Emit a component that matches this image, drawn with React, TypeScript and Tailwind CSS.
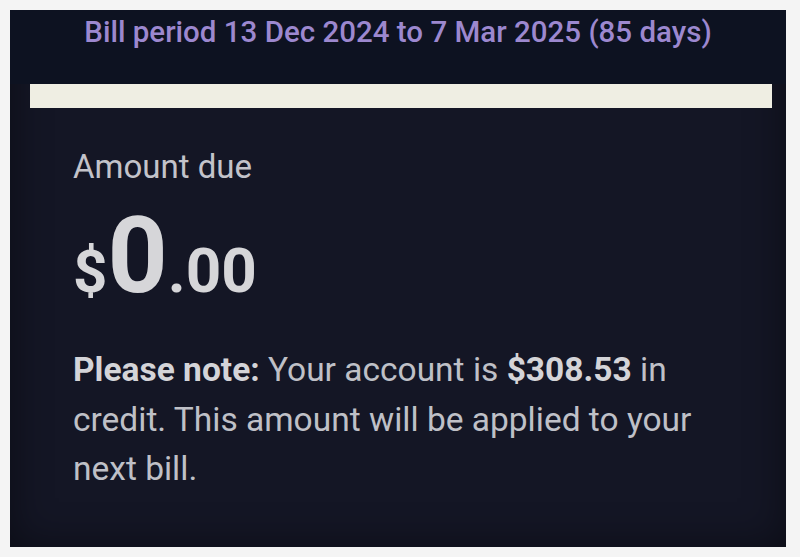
export default function App() {
  return (
    <div className="w-[800px] h-[557px] bg-[#f4f4f4] p-[10px] pr-[14px] pb-[10px] font-['Roboto',sans-serif]">
      <div className="w-full h-full flex flex-col bg-[#141625] shadow-[inset_0_0_40px_rgba(0,0,0,0.45)]">
        {/* Bill period header */}
        <div className="h-[74px] bg-[#0d1221] pt-[8px] flex justify-center">
          <p className="text-[29.5px] leading-none font-medium text-[#9c88cf]">
            Bill period 13 Dec 2024 to 7 Mar 2025 (85 days)
          </p>
        </div>
        <div className="h-[24px] ml-[20px] mr-[14px] bg-[#efeee3]" />

        {/* Amount */}
        <div className="pl-[63px] pt-[42px]">
          <p className="text-[33px] leading-none text-[#c3c3ca]">Amount due</p>
          <p className="mt-[21px] leading-none font-bold text-[#d6d6d9] flex items-baseline">
            <span className="text-[60px]">$</span>
            <span className="text-[105px]">0</span>
            <span className="text-[62px]">.00</span>
          </p>
          <p className="mt-[36px] w-[660px] text-[33.5px] leading-[49.5px] text-[#bfc0c7]">
            <span className="font-bold text-[#d4d4d8]">Please note:</span> Your account is{" "}
            <span className="font-bold text-[#d4d4d8]">$308.53</span> in credit. This amount will be applied to your
            next bill.
          </p>
        </div>
      </div>
    </div>
  )
}
